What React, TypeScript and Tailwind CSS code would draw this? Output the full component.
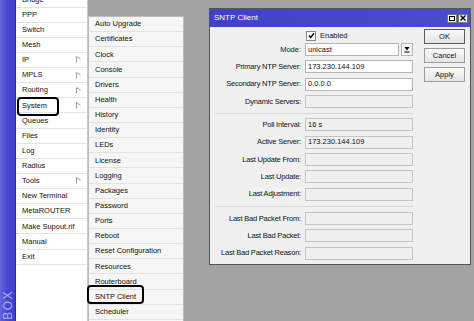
const mainMenu: { label: string; sub?: boolean }[] = [
  { label: "Bridge" },
  { label: "PPP" },
  { label: "Switch" },
  { label: "Mesh" },
  { label: "IP", sub: true },
  { label: "MPLS", sub: true },
  { label: "Routing", sub: true },
  { label: "System", sub: true },
  { label: "Queues" },
  { label: "Files" },
  { label: "Log" },
  { label: "Radius" },
  { label: "Tools", sub: true },
  { label: "New Terminal" },
  { label: "MetaROUTER" },
  { label: "Make Supout.rif" },
  { label: "Manual" },
  { label: "Exit" },
]

const systemMenu = [
  "Auto Upgrade",
  "Certificates",
  "Clock",
  "Console",
  "Drivers",
  "Health",
  "History",
  "Identity",
  "LEDs",
  "License",
  "Logging",
  "Packages",
  "Password",
  "Ports",
  "Reboot",
  "Reset Configuration",
  "Resources",
  "Routerboard",
  "SNTP Client",
  "Scheduler",
]

function SubArrow() {
  return (
    <svg width="5" height="7" viewBox="0 0 5 7" className="shrink-0">
      <path d="M0.5 0.5 V6.5 M0.5 0.5 L4.5 3.2" stroke="#9a9a9a" strokeWidth="1" fill="none" />
    </svg>
  )
}

function Field({ label, value = "", editable = false }: { label: string; value?: string; editable?: boolean }) {
  return (
    <div className="flex h-[13px] items-center">
      <div className="w-[95px] pr-[4px] text-right whitespace-nowrap tracking-[-0.2px]">{label}</div>
      <div
        className={
          editable
            ? "flex h-[13px] w-[108px] items-center border border-[#b4b4b4] bg-white pl-[2px]"
            : "flex h-[13px] w-[108px] items-center border border-[#c4c4c4] bg-[#f0f0f0] pl-[2px]"
        }
      >
        {value}
      </div>
    </div>
  )
}

function Button({ label, primary = false }: { label: string; primary?: boolean }) {
  return (
    <div
      className={
        primary
          ? "flex h-[15px] w-[41px] items-center justify-center border border-[#5c5c5c] bg-gradient-to-b from-[#fafafa] to-[#e4e4e4]"
          : "flex h-[15px] w-[41px] items-center justify-center border border-[#9c9c9c] bg-gradient-to-b from-[#fafafa] to-[#e4e4e4]"
      }
    >
      {label}
    </div>
  )
}

export default function App() {
  return (
    <div className="flex h-[321px] w-[474px] overflow-hidden bg-[#a3a3a3] font-['Liberation_Sans',Arial,sans-serif] text-[7.5px] leading-none text-[#111]">
      {/* WinBox side bar */}
      <div className="flex h-full w-[16px] shrink-0 flex-col justify-end border-r border-[#2c2c9c] bg-gradient-to-r from-[#6464dc] via-[#4646d2] to-[#4040c8] pb-[1px]">
        <div className="rotate-180 self-center text-[12px] tracking-[1.5px] text-[#aeaef0] [writing-mode:vertical-rl]">
          BOX
        </div>
      </div>

      {/* main menu */}
      <div className="relative flex h-full w-[72px] shrink-0 flex-col border-r border-[#c8c8c8] bg-white">
        <div className="-mt-[7.6px] flex flex-col">
          {mainMenu.map((item) => (
            <div
              key={item.label}
              className="flex h-[15.125px] items-center justify-between border-b border-[#e4e4e4] pl-[6px] pr-[6px]"
            >
              <span className="whitespace-nowrap">{item.label}</span>
              {item.sub && <SubArrow />}
            </div>
          ))}
        </div>
        <div className="absolute left-[1px] top-[97px] h-[19px] w-[42px] rounded-[4px] border-[2.5px] border-black" />
      </div>

      {/* System sub menu */}
      <div className="relative mt-[16px] flex h-[305px] w-[96px] shrink-0 flex-col border-l border-t border-r border-[#bcbcbc] bg-[#f6f6f6]">
        {systemMenu.map((item) => (
          <div key={item} className="flex h-[15.15px] shrink-0 items-center border-b border-[#e2e2e2] pl-[6px]">
            <span className="whitespace-nowrap">{item}</span>
          </div>
        ))}
        <div className="absolute -left-[2px] top-[268px] h-[19px] w-[57px] rounded-[4px] border-[2.5px] border-black" />
      </div>

      {/* SNTP Client window */}
      <div className="ml-[25px] mt-[8px] flex h-[257px] w-[262px] shrink-0 flex-col border border-[#555] bg-[#f0f0f0]">
        <div className="flex h-[18px] items-center justify-between bg-gradient-to-r from-[#4141c4] to-[#4b4bd0] pl-[4px] pr-[2px] text-[8px] text-white">
          <span>SNTP Client</span>
          <div className="flex gap-[1px]">
            <div className="flex h-[9px] w-[10px] items-center justify-center border border-[#777] bg-[#f2f2f2]">
              <div className="h-[5px] w-[6px] border border-black" />
            </div>
            <div className="flex h-[9px] w-[10px] items-center justify-center border border-[#777] bg-[#f2f2f2]">
              <svg width="6" height="6" viewBox="0 0 6 6">
                <path d="M0.5 0.5 L5.5 5.5 M5.5 0.5 L0.5 5.5" stroke="#000" strokeWidth="1.4" />
              </svg>
            </div>
          </div>
        </div>

        <div className="flex pt-[1px]">
          {/* form */}
          <div className="flex flex-col">
            <div className="flex h-[14px] items-center pt-[1px]">
              <div className="w-[96px]" />
              <div className="flex items-center gap-[4px]">
                <div className="flex h-[10px] w-[10px] items-center justify-center border border-[#888] bg-white">
                  <svg width="7" height="7" viewBox="0 0 7 7">
                    <path d="M1 3.6 L2.8 5.4 L6 1.2" stroke="#000" strokeWidth="1.5" fill="none" />
                  </svg>
                </div>
                <span>Enabled</span>
              </div>
            </div>

            <div className="mt-[1px] flex flex-col gap-[4.3px]">
              <div className="flex h-[13px] items-center">
                <div className="w-[95px] pr-[4px] text-right">Mode:</div>
                <div className="flex gap-[2px]">
                  <div className="flex h-[13px] w-[94px] items-center border border-[#b4b4b4] bg-white pl-[2px]">unicast</div>
                  <div className="flex h-[13px] w-[12px] items-center justify-center border border-[#b4b4b4] bg-[#f4f4f4]">
                    <svg width="6" height="7" viewBox="0 0 6 7">
                      <path d="M0.5 1 H5.5 L3 4.5 Z" fill="#000" />
                      <path d="M0.5 6 H5.5" stroke="#000" strokeWidth="1" />
                    </svg>
                  </div>
                </div>
              </div>
              <Field label="Primary NTP Server:" value="173.230.144.109" editable />
              <Field label="Secondary NTP Server:" value="0.0.0.0" editable />
              <Field label="Dynamic Servers:" />
            </div>

            <div className="ml-[5px] mt-[5px] w-[198px] border-t border-[#d9d9d9]" />

            <div className="mt-[4.5px] flex flex-col gap-[4.3px]">
              <Field label="Poll Interval:" value="16 s" />
              <Field label="Active Server:" value="173.230.144.109" />
              <Field label="Last Update From:" />
              <Field label="Last Update:" />
              <Field label="Last Adjustment:" />
            </div>

            <div className="ml-[5px] mt-[5px] w-[198px] border-t border-[#d9d9d9]" />

            <div className="mt-[5.5px] flex flex-col gap-[4.3px]">
              <Field label="Last Bad Packet From:" />
              <Field label="Last Bad Packet:" />
              <Field label="Last Bad Packet Reason:" />
            </div>
          </div>

          {/* buttons */}
          <div className="ml-[11px] mt-[1px] flex flex-col gap-[4px]">
            <Button label="OK" primary />
            <Button label="Cancel" />
            <Button label="Apply" />
          </div>
        </div>
      </div>
    </div>
  )
}
